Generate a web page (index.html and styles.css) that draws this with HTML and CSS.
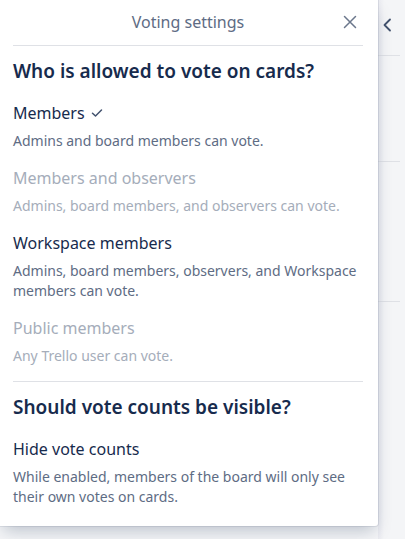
FILE: index.html
```html
<!DOCTYPE html>
<html>
<head>
<meta charset="utf-8">
<link rel="stylesheet" href="styles.css">
</head>
<body>
<div class="page">
  <div class="popover">
    <div class="header">
      <span class="title">Voting settings</span>
      <span class="close">
        <svg width="14" height="14" viewBox="0 0 14 14"><path d="M1.5 1.5 L12.5 12.5 M12.5 1.5 L1.5 12.5" stroke="#6b778c" stroke-width="1.5" fill="none" stroke-linecap="round"/></svg>
      </span>
    </div>
    <h2 class="heading">Who is allowed to vote on cards?</h2>
    <div class="option">
      <div class="opt-title">Members <svg class="check" width="12" height="10" viewBox="0 0 12 10"><path d="M1.5 5.2 L4.5 8 L10.5 2" stroke="#42526e" stroke-width="1.5" fill="none" stroke-linecap="round" stroke-linejoin="round"/></svg></div>
      <div class="opt-desc">Admins and board members can vote.</div>
    </div>
    <div class="option disabled">
      <div class="opt-title">Members and observers</div>
      <div class="opt-desc">Admins, board members, and observers can vote.</div>
    </div>
    <div class="option">
      <div class="opt-title">Workspace members</div>
      <div class="opt-desc">Admins, board members, observers, and Workspace members can vote.</div>
    </div>
    <div class="option disabled">
      <div class="opt-title">Public members</div>
      <div class="opt-desc">Any Trello user can vote.</div>
    </div>
    <hr class="divider">
    <h2 class="heading">Should vote counts be visible?</h2>
    <div class="option last">
      <div class="opt-title">Hide vote counts</div>
      <div class="opt-desc">While enabled, members of the board will only see their own votes on cards.</div>
    </div>
  </div>
  <div class="side">
    <div class="chev">
      <svg width="12" height="14" viewBox="0 0 12 14"><path d="M9 1.5 L3.5 7 L9 12.5" stroke="#42526e" stroke-width="1.8" fill="none" stroke-linecap="round" stroke-linejoin="round"/></svg>
    </div>
    <div class="side-line l1"></div>
    <div class="side-line l2"></div>
    <div class="side-line l3"></div>
  </div>
</div>
</body>
</html>
```
FILE: styles.css
```css
html, body {
  margin: 0;
  padding: 0;
}
body {
  background: #f4f5f7;
  font-family: "Noto Sans", "Open Sans", sans-serif;
  width: 405px;
  height: 539px;
  overflow: hidden;
}
.page {
  display: flex;
  align-items: flex-start;
}
.popover {
  width: 350px;
  flex: none;
  background: #fff;
  padding: 0 15px 19px 13px;
  border-radius: 0 0 3px 0;
  box-shadow: 0 8px 16px -4px rgba(9,30,66,.25), 0 0 0 1px rgba(9,30,66,.08);
  position: relative;
  z-index: 1;
}
.header {
  height: 45px;
  border-bottom: 1px solid #dfe1e6;
  display: flex;
  align-items: center;
  justify-content: center;
  position: relative;
}
.title {
  font-size: 16px;
  color: #5e6c84;
  line-height: 20px;
  margin-top: -1px;
}
.close {
  position: absolute;
  right: 6px;
  top: 15px;
  width: 14px;
  height: 14px;
  display: flex;
}
.heading {
  margin: 12px 0 17px;
  font-size: 19px;
  line-height: 26px;
  font-weight: 600;
  color: #172b4d;
}
.option {
  margin-bottom: 15px;
}
.option.last {
  margin-bottom: 0;
}
.opt-title {
  font-size: 16px;
  line-height: 24px;
  color: #172b4d;
  display: flex;
  align-items: center;
  gap: 6px;
  margin-bottom: 6px;
}
.opt-desc {
  font-size: 14px;
  line-height: 20px;
  color: #5e6c84;
}
.option.disabled .opt-title,
.option.disabled .opt-desc {
  color: #a5adba;
}
.divider {
  border: 0;
  border-top: 1px solid #dfe1e6;
  margin: 0;
}
.side {
  flex: 1;
  height: 539px;
  background: linear-gradient(to right, #e9eaf0, #f4f5f7 6px);
  position: relative;
}
.chev {
  display: flex;
  padding: 18px 0 0 3px;
  height: 14px;
}
.side-line {
  height: 1px;
  background: #dfe1e6;
  margin-right: 5px;
}
.l1 { margin-top: 23px; }
.l2 { margin-top: 105px; }
.l3 { margin-top: 139px; }
```
